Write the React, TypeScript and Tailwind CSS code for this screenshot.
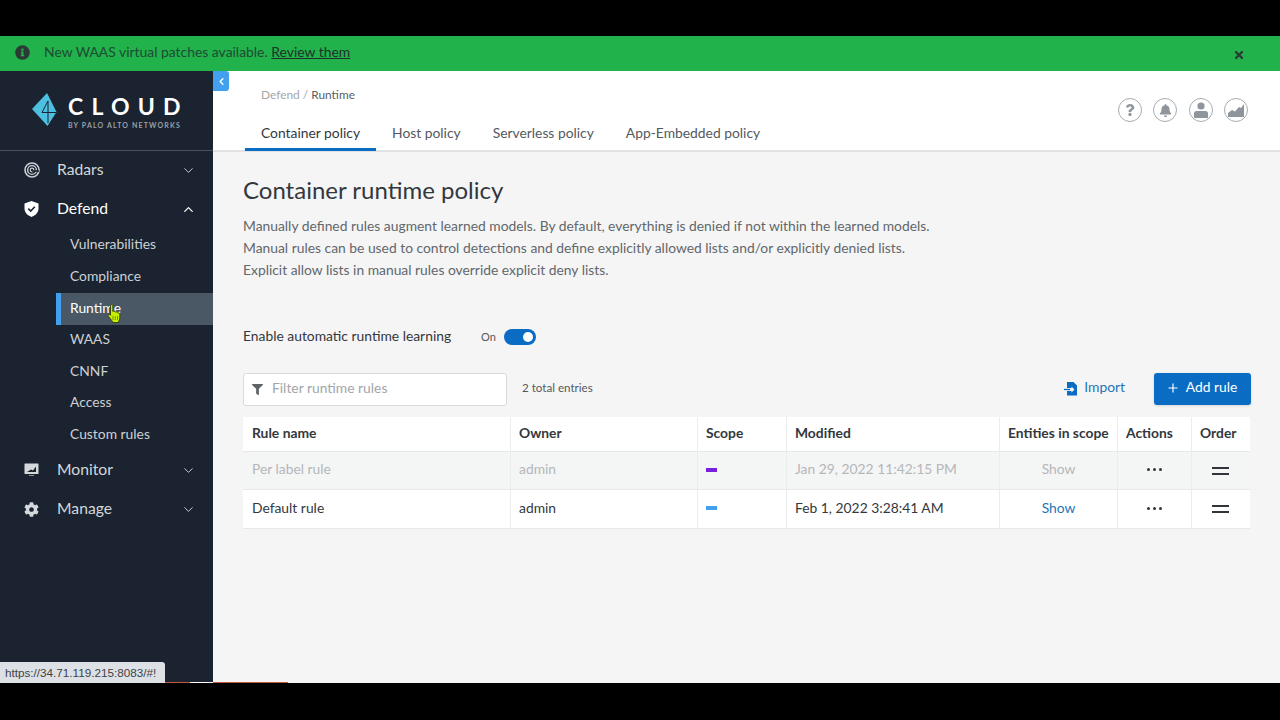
import { ChevronDown, ChevronLeft, ChevronUp, Plus } from 'lucide-react';
import { FaBell, FaCog, FaFilter, FaInfoCircle, FaQuestion, FaTimes } from 'react-icons/fa';

const subItems = ['Vulnerabilities', 'Compliance', 'Runtime', 'WAAS', 'CNNF', 'Access', 'Custom rules'];
const tabs = ['Container policy', 'Host policy', 'Serverless policy', 'App-Embedded policy'];
const gridCols = 'grid grid-cols-[268px_187px_89px_213px_118px_74px_58px]';

function RadarIcon() {
  return (
    <svg width="16" height="16" viewBox="0 0 16 16" fill="none" stroke="#c9d0d7">
      <circle cx="8" cy="8" r="7" strokeWidth="1.6" />
      <circle cx="8" cy="8" r="4.4" strokeWidth="1.4" />
      <circle cx="8" cy="8" r="1.8" strokeWidth="1.2" />
      <path d="M8 9h7" strokeWidth="1.6" stroke="#1a232f" />
    </svg>
  );
}

function ShieldIcon() {
  return (
    <svg width="15" height="16" viewBox="0 0 15 16">
      <path d="M7.5 0 14.5 2.4V7.5C14.5 11.5 11.5 14.5 7.5 16 3.5 14.5.5 11.5.5 7.5V2.4Z" fill="#fff" />
      <path d="M4.3 7.6 6.7 10 10.8 5.8" fill="none" stroke="#1a232f" strokeWidth="1.6" />
    </svg>
  );
}

function MonitorIcon() {
  return (
    <svg width="15" height="14" viewBox="0 0 15 14">
      <rect x="0.5" y="0.5" width="14" height="10.5" rx="0.5" fill="#d5d9de" />
      <path d="M3 9 7 6.5 9 7.5 12 3.5V9Z" fill="#1a232f" />
      <rect x="5" y="12" width="5" height="1" fill="#8a929b" />
    </svg>
  );
}

function LogoMark() {
  return (
    <svg width="25" height="33" viewBox="0 0 25 33">
      <path d="M15 0 0 16 15.5 33 24.5 19Z" fill="#4dbfe0" />
      <path d="M16 8V30M16 8 10 19.5H24" fill="none" stroke="#1a232f" strokeWidth="1" />
    </svg>
  );
}

function AreaIcon() {
  return (
    <svg width="16" height="13" viewBox="0 0 16 13">
      <path d="M0 13V9L4 6 7 7.5 11 3 13 4 16 0V13Z" fill="#8f959c" />
    </svg>
  );
}

function UserIcon() {
  return (
    <svg width="14" height="16" viewBox="0 0 14 16">
      <circle cx="7" cy="4" r="3.6" fill="#8f959c" />
      <path d="M0 16V11.5C0 10 1 9 2.5 9H11.5C13 9 14 10 14 11.5V16Z" fill="#8f959c" />
    </svg>
  );
}

function ImportIcon() {
  return (
    <svg width="14" height="14" viewBox="0 0 14 14">
      <path d="M3 0H9.5L13 3.5V13.5H3V9H7.5V10.5L10.5 7.5 7.5 4.5V6H3Z" fill="#0b6cc4" />
      <path d="M0 7.5H6" stroke="#0b6cc4" strokeWidth="1.3" />
    </svg>
  );
}

function NavItem({ icon, label, open }: { icon: React.ReactNode; label: string; open?: boolean }) {
  return (
    <div className="flex h-[39px] items-center pb-[1px] pl-6 pr-[17px] text-[15.7px] text-[#d3d7db]">
      <span className="flex w-[33px] items-center">{icon}</span>
      <span className={open ? 'flex-1 text-white' : 'flex-1'}>{label}</span>
      {open ? (
        <ChevronUp size={15} strokeWidth={2} className="text-white" />
      ) : (
        <ChevronDown size={15} strokeWidth={1.6} className="text-[#c5cad0]" />
      )}
    </div>
  );
}

function HeaderCircle({ children }: { children: React.ReactNode }) {
  return (
    <div className="flex h-6 w-6 items-center justify-center rounded-full border border-[#a6abb1] text-[#8f959c]">
      {children}
    </div>
  );
}

function RuleRow({ name, date, color, muted }: { name: string; date: string; color: string; muted?: boolean }) {
  const cell = 'flex items-center border-r border-[#ebecee] px-2 pb-[2px]';
  return (
    <div className={`${gridCols} h-[38px] border-b border-[#e6e8ea] text-[13.85px] last:h-[39px] ${muted ? 'bg-[#f4f5f5] text-[#b4b7ba]' : 'bg-white text-[#33383d]'}`}>
      <div className={`${cell} pl-[9px]`}>{name}</div>
      <div className={cell}>admin</div>
      <div className={`${cell} pb-0`}>
        <span className={`h-1 w-[11px] ${color}`} />
      </div>
      <div className={cell}>{date}</div>
      <div className={`${cell} justify-center ${muted ? '' : 'text-[#1f74b8]'}`}>Show</div>
      <div className={`${cell} justify-center gap-[3px] pb-0`}>
        <span className="h-[3px] w-[3px] rounded-full bg-[#30353a]" />
        <span className="h-[3px] w-[3px] rounded-full bg-[#30353a]" />
        <span className="h-[3px] w-[3px] rounded-full bg-[#30353a]" />
      </div>
      <div className="flex flex-col items-center justify-center gap-[4px] pr-[2px]">
        <span className="h-[2px] w-[17px] bg-[#30353a]" />
        <span className="h-[2px] w-[17px] bg-[#30353a]" />
      </div>
    </div>
  );
}

export default function App() {
  return (
    <div className="relative flex h-[720px] w-[1280px] flex-col overflow-hidden bg-black pb-[37px] pt-9 font-['Lato',sans-serif]">
      <div className="flex h-[35px] shrink-0 items-center justify-between bg-[#22b24c] pl-[15px] pr-[35px] text-[13.9px] text-[#1f4a33]">
        <div className="flex items-center gap-[14px] pb-[2px]">
          <FaInfoCircle size={15} className="text-[#2b3a35]" />
          <span className="pb-[1px]">
            New WAAS virtual patches available. <span className="text-[#20302a] underline">Review them</span>
          </span>
        </div>
        <FaTimes size={12} className="mt-[2px] text-[#2b3a35]" />
      </div>

      <div className="flex min-h-0 flex-1">
        <aside className="w-[213px] shrink-0 bg-[#1a232f]">
          <div className="flex h-20 items-center border-b border-[#4a535d] pb-[2px] pl-8">
            <LogoMark />
            <div className="ml-[11px] mt-[5px]">
              <div className="text-[23px] font-bold leading-[24px] tracking-[8.2px] text-white">CLOUD</div>
              <div className="mt-[3px] text-[7px] font-bold leading-[9px] tracking-[1.15px] text-[#9aa1a8]">BY PALO ALTO NETWORKS</div>
            </div>
          </div>
          <nav>
            <NavItem icon={<RadarIcon />} label="Radars" />
            <NavItem icon={<ShieldIcon />} label="Defend" open />
            <div className="pl-14 text-[13.85px] text-[#ccd1d6]">
              {subItems.map((item, i) => (
                <div
                  key={item}
                  className={
                    item === 'Runtime'
                      ? 'flex h-[32px] items-center border-l-[5px] border-[#42a0ee] bg-[#4a5866] pb-[2px] pl-[9px] text-white'
                      : i < 2
                        ? 'flex h-[32px] items-center pb-[2px] pl-[14px]'
                        : 'flex h-[31.5px] items-center pb-[2px] pl-[14px]'
                  }
                >
                  {item}
                </div>
              ))}
            </div>
            <NavItem icon={<MonitorIcon />} label="Monitor" />
            <NavItem icon={<FaCog size={15} className="text-[#d5d9de]" />} label="Manage" />
          </nav>
        </aside>

        <main className="relative min-w-0 flex-1 bg-[#f5f5f5]">
          <button className="absolute left-0 top-0 flex h-5 w-4 items-center justify-center rounded-r-[3px] bg-[#42a0ee] text-white">
            <ChevronLeft size={11} strokeWidth={3} />
          </button>

          <header className="flex h-[81px] justify-between border-b-2 border-[#e1e2e4] bg-white pl-8 pr-[32px]">
            <div>
              <div className="pl-4 pt-[16px] text-[11.9px] leading-4 text-[#a4a7aa]">
                Defend / <span className="text-[#5a5f64]">Runtime</span>
              </div>
              <div className="mt-[15px] flex text-[13.85px] text-[#55595e]">
                {tabs.map((tab, i) => (
                  <div
                    key={tab}
                    className={
                      i === 0
                        ? 'flex h-[33px] items-center border-b-[3px] border-[#0b6cc4] px-4 text-[#33383d]'
                        : 'flex h-[33px] items-center px-4 pb-[3px]'
                    }
                  >
                    {tab}
                  </div>
                ))}
              </div>
            </div>
            <div className="mt-[27px] flex gap-[11.5px]">
              <HeaderCircle>
                <FaQuestion size={12} />
              </HeaderCircle>
              <HeaderCircle>
                <FaBell size={13} />
              </HeaderCircle>
              <HeaderCircle>
                <UserIcon />
              </HeaderCircle>
              <HeaderCircle>
                <AreaIcon />
              </HeaderCircle>
            </div>
          </header>

          <div className="pl-[30px] pr-[29px]">
            <h1 className="mt-[23px] text-[24px] leading-[30px] text-[#33383d]">Container runtime policy</h1>
            <div className="mt-[10px] text-[13.85px] leading-[22px] text-[#62676c]">
              <p>Manually defined rules augment learned models. By default, everything is denied if not within the learned models.</p>
              <p>Manual rules can be used to control detections and define explicitly allowed lists and/or explicitly denied lists.</p>
              <p>Explicit allow lists in manual rules override explicit deny lists.</p>
            </div>

            <div className="mt-[44px] flex h-6 items-center">
              <span className="w-[238px] pb-[2px] text-[13.85px] text-[#33383d]">Enable automatic runtime learning</span>
              <span className="w-[23px] text-[11px] text-[#55595e]">On</span>
              <span className="flex h-4 w-8 items-center justify-end rounded-full bg-[#0b6cc4] pr-[3px]">
                <span className="h-[10px] w-[10px] rounded-full bg-white" />
              </span>
            </div>

            <div className="mt-[24px] flex h-[33px] items-center">
              <div className="flex h-[33px] w-[264px] items-center gap-[9px] rounded-[3px] border border-[#d8dadc] bg-white pb-[2px] pl-2 text-[13.85px] text-[#a2a6aa]">
                <FaFilter size={11} className="mt-[2px] text-[#5f6368]" />
                Filter runtime rules
              </div>
              <span className="ml-[15px] pb-[3px] text-[11.6px] text-[#55595e]">2 total entries</span>
              <div className="flex-1" />
              <span className="pb-[2px]">
                <ImportIcon />
              </span>
              <span className="ml-[6px] mr-[29px] pb-[5px] text-[13.85px] text-[#1f74b8]">Import</span>
              <button className="-mt-[2px] flex h-[32px] w-[97px] items-center justify-center gap-[6px] rounded-[3px] bg-[#0b6cc4] pb-[2px] pr-[2px] text-[13.85px] text-white shadow-sm">
                <Plus size={14} strokeWidth={2} />
                Add rule
              </button>
            </div>

            <div className="mt-[11px] w-[1007px]">
              <div className={`${gridCols} h-[35px] border-b border-[#e6e8ea] bg-white text-[13.85px] font-bold text-[#33383d]`}>
                {['Rule name', 'Owner', 'Scope', 'Modified', 'Entities in scope', 'Actions', 'Order'].map((h) => (
                  <div key={h} className="flex items-center whitespace-nowrap border-r border-[#ebecee] px-2 pb-[2px] first:pl-[9px] last:border-r-0">
                    {h}
                  </div>
                ))}
              </div>
              <RuleRow name="Per label rule" date="Jan 29, 2022 11:42:15 PM" color="bg-[#7a1fe0]" muted />
              <RuleRow name="Default rule" date="Feb 1, 2022 3:28:41 AM" color="bg-[#42a0ee]" />
            </div>
          </div>
        </main>
      </div>

      {/* status url + cursor sit on top of the page */}
      <div className="absolute left-0 top-[662px] flex h-[21px] w-[165px] items-center rounded-tr-[3px] bg-[#dde1e5] pl-[5px] font-['Liberation_Sans',sans-serif] text-[11.7px] text-[#3d4145]">
        https://34.71.119.215:8083/#!
      </div>
      <div className="absolute left-[165px] top-[682px] h-[1px] w-[25px] bg-[#c0573f]" />
      <div className="absolute left-[190px] top-[682px] h-[1px] w-[23px] bg-white" />
      <div className="absolute left-[213px] top-[682px] h-[1px] w-[75px] bg-[#c0573f]" />
      <svg className="absolute left-[107px] top-[304px]" width="14" height="19" viewBox="0 0 14 19">
        <path
          d="M3.5 1.5C3.5.3 5.8.3 5.8 1.5V7.5C6.8 6.8 8 7 8.2 8 9.2 7.5 10.2 8 10.4 8.8 11.4 8.4 12.8 9 12.8 10.5V14C12.8 15.5 12.2 16.5 11.5 17.5V18.5H5.5V17.5L1.2 12C.4 10.8 1.8 9.7 3 10.8L3.5 11.3Z"
          fill="#c6ef00"
          stroke="#333d10"
          strokeWidth="0.9"
        />
        <path d="M6 12V16M8.3 12V16M10.5 12V16" stroke="#5c6c10" strokeWidth="0.7" fill="none" />
      </svg>
    </div>
  );
}
